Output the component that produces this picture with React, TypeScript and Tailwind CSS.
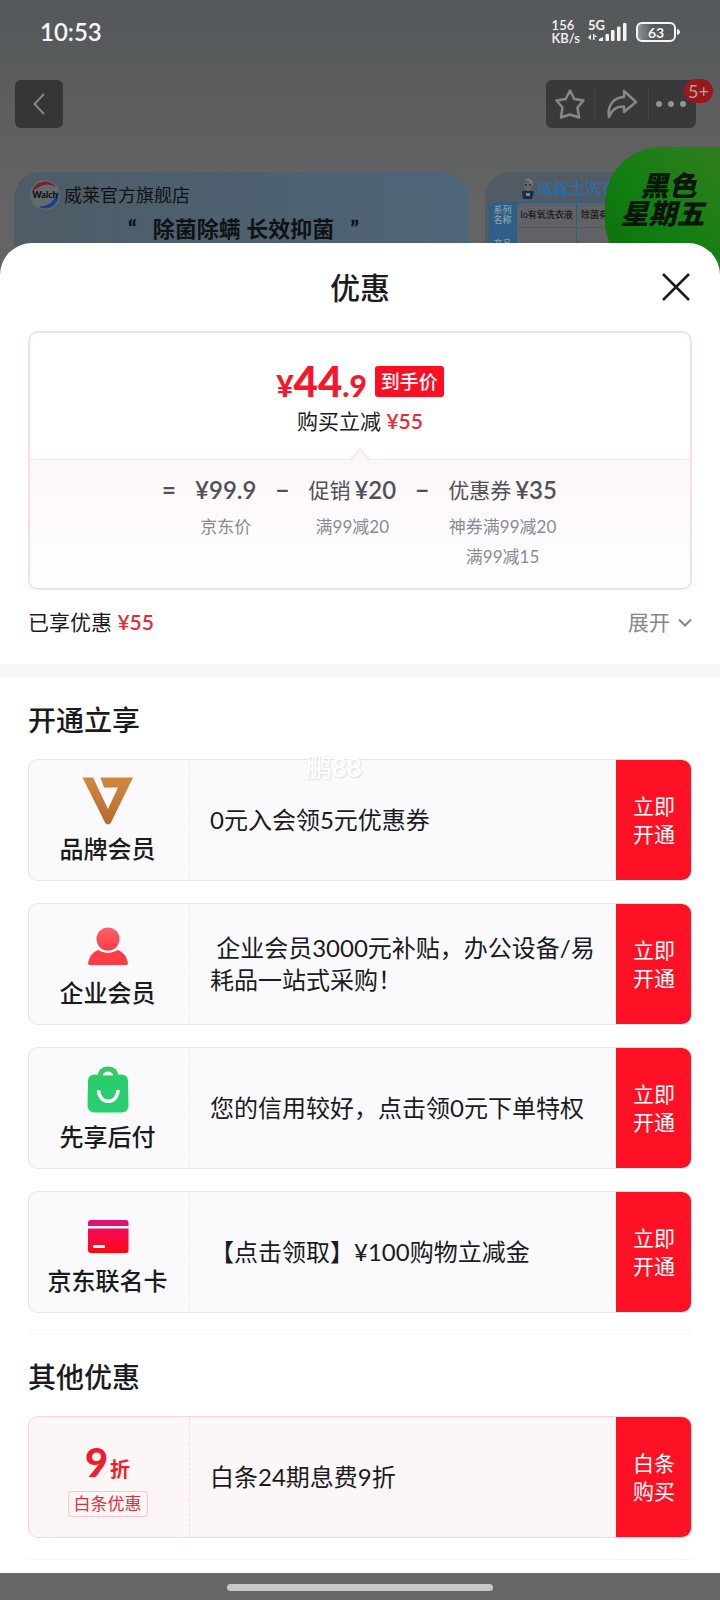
import type { ReactNode } from 'react'

interface Offer {
  id:     string
  lead:   ReactNode
  text:   string
  action: [string, string]
  tone:   'plain' | 'pink'
}

function BrandIcon() {
  return (
    <svg width="52" height="48" viewBox="0 0 52 48" aria-hidden="true">
      <defs>
        <linearGradient id="brand" x1="0" y1="0" x2="0" y2="1">
          <stop offset="0" stopColor="#d3873f" />
          <stop offset="1" stopColor="#b56a2c" />
        </linearGradient>
      </defs>
      <path
        fill="url(#brand)"
        d="M0.5 0.5H11L26 32L36 10.500H22L18.500 0.500H51L29 45.500Q26 49.500 23 45.500Z"
      />
    </svg>
  )
}

function PersonIcon() {
  return (
    <svg width="42" height="48" viewBox="0 0 42 48" aria-hidden="true">
      <defs>
        <linearGradient id="person" x1="0" y1="0" x2="0" y2="1">
          <stop offset="0" stopColor="#fb636c" />
          <stop offset="1" stopColor="#fd3c45" />
        </linearGradient>
      </defs>
      <circle cx="21" cy="18" r="11.500" fill="url(#person)" />
      <path fill="#fd3e46" d="M11 29Q21 35 31 29Q39 32 41 42Q41 44 39 44H3Q1 44 1 42Q3 32 11 29Z" />
    </svg>
  )
}

function BagIcon() {
  return (
    <svg width="42" height="48" viewBox="0 0 42 48" aria-hidden="true">
      <defs>
        <linearGradient id="bag" x1="0" y1="0" x2="0" y2="1">
          <stop offset="0" stopColor="#2bcb68" />
          <stop offset="1" stopColor="#27d072" />
        </linearGradient>
      </defs>
      <path fill="none" stroke="#36c96c" strokeWidth="5" d="M12.500 14C13 6 17 4 21 4S29 6 29.500 14" />
      <path
        fill="url(#bag)"
        d="M8 9.500Q21 11.500 34 9.500Q41 9.500 41 16L41.500 40Q41.500 47.500 34 47.500H8Q0.500 47.500 0.500 40L1 16Q1 9.500 8 9.500Z"
      />
      <path fill="#fff" d="M15.500 9.500Q21 4 26.500 9.500Z" />
      <path fill="none" stroke="#fff" strokeWidth="3.500" d="M11.500 25C12 40 30.500 40 31 25" />
    </svg>
  )
}

function CardIcon() {
  return (
    <svg width="42" height="48" viewBox="0 0 42 48" aria-hidden="true">
      <defs>
        <linearGradient id="card" x1="0" y1="0" x2="0" y2="1">
          <stop offset="0" stopColor="#f00a5c" />
          <stop offset="1" stopColor="#fd0a12" />
        </linearGradient>
      </defs>
      <path fill="#e01270" d="M1 17V14Q1 11 4 11H39Q41.500 11 41.500 14V17Z" />
      <path fill="url(#card)" d="M1 19.500H41.500V41Q41.500 44 39 44H4Q1 44 1 41Z" />
      <rect x="6" y="36" width="12" height="3" rx="1" fill="#fff" />
    </svg>
  )
}

function Lead({ icon, label }: { icon: ReactNode; label: string }) {
  return (
    <>
      {icon}
      <h3 className="mt-2 text-[24px] leading-8 font-medium">{label}</h3>
    </>
  )
}

const MEMBER_OFFERS: Offer[] = [
  { id: 'brand',   lead: <Lead icon={<BrandIcon />} label="品牌会员" />,   text: '0元入会领5元优惠券',                         action: ['立即', '开通'], tone: 'plain' },
  { id: 'company', lead: <Lead icon={<PersonIcon />} label="企业会员" />,  text: '\u00a0企业会员3000元补贴，办公设备/易耗品一站式采购！', action: ['立即', '开通'], tone: 'plain' },
  { id: 'later',   lead: <Lead icon={<BagIcon />} label="先享后付" />,     text: '您的信用较好，点击领0元下单特权',             action: ['立即', '开通'], tone: 'plain' },
  { id: 'joint',   lead: <Lead icon={<CardIcon />} label="京东联名卡" />,  text: '【点击领取】¥100购物立减金',                  action: ['立即', '开通'], tone: 'plain' },
]

const OTHER_OFFERS: Offer[] = [
  {
    id: 'baitiao',
    lead: (
      <>
        <p className="mt-2 flex h-10 items-baseline gap-[2px] leading-10 text-[#f21c2c]">
          <span className="text-[40px] font-black">9</span>
          <span className="text-[20px] font-bold">折</span>
        </p>
        <p className="mt-[9px] rounded-[3px] border border-[#f6c9d0] px-[5px] text-[17px] leading-6 text-[#e0303c]">白条优惠</p>
      </>
    ),
    text: '白条24期息费9折',
    action: ['白条', '购买'],
    tone: 'pink',
  },
]

const TONES = {
  plain: { card: 'border-[#e6e6ea] bg-[#fafafc]', rule: 'border-[#e9e9ee]' },
  pink:  { card: 'border-[#f8d3da] bg-[#fdf6f6]', rule: 'border-[#f5d9dd]' },
}

function OfferCard({ offer }: { offer: Offer }) {
  const tone = TONES[offer.tone]
  return (
    <li className={`flex min-h-[122px] overflow-hidden rounded-[10px] border ${tone.card}`}>
      <div className={`flex w-[161px] shrink-0 flex-col items-center border-r border-dashed pt-[17px] pr-[3px] ${tone.rule}`}>
        {offer.lead}
      </div>
      <p className="flex min-w-0 flex-1 items-center pl-5 pr-2 text-[24px] leading-8">{offer.text}</p>
      <button type="button" className="-my-px -mr-px w-[76px] shrink-0 bg-[#fe1124] text-[21px] leading-7 text-white">
        {offer.action[0]}<br />{offer.action[1]}
      </button>
    </li>
  )
}

function StatusBar() {
  return (
    <div className="flex h-16 items-center justify-between pl-10 pr-10 text-[#f4f4f4]">
      <time className="text-[24px] font-semibold">10:53</time>
      <div className="flex items-center gap-2">
        <p className="text-[13px] leading-[13px] font-semibold">156<br />KB/s</p>
        <div className="relative">
          <span className="absolute left-0 -top-[3px] text-[13px] leading-3 font-bold">5G</span>
          <svg width="40" height="20" viewBox="0 0 40 20" fill="#f4f4f4" aria-hidden="true">
            <path d="M3 12V18L0 15.500ZM5 18V12H6.500V18ZM7 13L9.500 15H7Z" />
            <path d="M11 19V17L15 15V19Z" />
            <rect x="17.500" y="12" width="3.500" height="7" rx="1" />
            <rect x="23" y="8" width="3.500" height="11" rx="1" />
            <rect x="29" y="4.500" width="3.500" height="14.500" rx="1" />
            <rect x="35" y="1" width="3.500" height="18" rx="1" />
          </svg>
        </div>
        <div className="flex items-center">
          <span className="flex h-5 w-10 items-center justify-center rounded-md border-2 border-[#f4f4f4] bg-linear-to-r from-[#8e9292] to-transparent to-40% text-[14px] font-bold">63</span>
          <span className="h-[6px] w-1 rounded-r-sm border-l border-transparent bg-[#f4f4f4] bg-clip-padding" />
        </div>
      </div>
    </div>
  )
}

function NavBar() {
  return (
    <nav className="flex justify-between pl-[15px] pr-6 pt-4 text-[#868788]">
      <button type="button" aria-label="返回" className="flex size-12 items-center justify-center rounded-md bg-[#343637]">
        <svg width="14" height="24" viewBox="0 0 14 24" fill="none" stroke="currentColor" strokeWidth="2" aria-hidden="true">
          <path d="M12 2L2.500 12L12 22" />
        </svg>
      </button>
      <div className="relative flex h-12 w-[150px] items-center rounded-md bg-[#37393a]">
        <button type="button" aria-label="收藏" className="flex h-8 w-[49px] items-center justify-center border-r border-[#434546]">
          <svg width="30" height="30" viewBox="0 0 30 30" fill="none" stroke="currentColor" strokeWidth="2.500" strokeLinejoin="round" aria-hidden="true">
            <path d="M15 1.500L19.300 10L28.500 11.500L22.500 18.500L24 28.500L15 25.500L6 28.500L7.500 18.500L1.500 11.500L10.700 10Z" />
          </svg>
        </button>
        <button type="button" aria-label="分享" className="flex h-8 w-[54px] items-center justify-center border-r border-[#434546]">
          <svg width="30" height="30" viewBox="0 0 30 30" fill="none" stroke="currentColor" strokeWidth="2.500" strokeLinejoin="round" aria-hidden="true">
            <path d="M17 2L29 13L17 23V17.500C10 17 5 20 2 28C0 16 7 8.500 17 8Z" />
          </svg>
        </button>
        <button type="button" aria-label="更多" className="flex h-8 flex-1 items-center justify-center gap-[6px] pr-1">
          <span className="size-[6px] rounded-full bg-[#939494]" />
          <span className="size-[6px] rounded-full bg-[#939494]" />
          <span className="size-[6px] rounded-full bg-[#939494]" />
        </button>
        <span className="absolute -right-[17px] -top-px flex h-6 items-center rounded-full bg-[#98181b] px-1 text-[18px] text-[#bd9c9c]">5+</span>
      </div>
    </nav>
  )
}

function WalchLogo() {
  return (
    <svg width="30" height="30" viewBox="0 0 30 30" aria-hidden="true">
      <circle cx="15" cy="15" r="15" fill="#656a6f" />
      <path d="M2 12A13.500 13.500 0 0 1 26 7Q15 0 2 12Z" fill="#7e1f27" />
      <path d="M28 11A13.500 13.500 0 0 1 8 26.500Q23 27 28 11Z" fill="#1b3f8c" />
      <text x="15" y="18" textAnchor="middle" fontSize="9" fontWeight="900" fill="#0c0c0e">Walch</text>
    </svg>
  )
}

// Product gallery that shows above the sheet, already dimmed
function Gallery() {
  return (
    <div className="relative mt-[44px] flex h-[103px] gap-4 overflow-hidden pl-[14px]">
      <section className="w-[455px] shrink-0 rounded-t-[26px] bg-linear-to-r from-[#4d5c66] to-[#4f6579] pt-2 text-[#101214]">
        <div className="flex items-center gap-1 pl-4">
          <WalchLogo />
          <span className="text-[18px] leading-7">威莱官方旗舰店</span>
        </div>
        <div className="flex justify-center gap-4 pt-[3px] pl-1 text-[22px] leading-8 font-bold">
          <span className="font-black">“</span>
          <span>除菌除螨 长效抑菌</span>
          <span className="font-black">”</span>
        </div>
      </section>
      <section className="min-w-0 flex-1 rounded-tl-[26px] bg-[#525a63] pl-1 pt-1">
        <div className="flex items-center gap-[2px] pb-[2px] pl-8">
          <svg width="14" height="22" viewBox="0 0 14 22" aria-hidden="true">
            <path d="M3 3Q9 -1 12 5V9Q8 3 3 3Z" fill="#77797b" />
            <circle cx="7" cy="9" r="4" fill="#6d6865" />
            <path d="M4 8H6M8 8H10" stroke="#202225" strokeWidth="1.500" />
            <path d="M1 14H13L11 22H2Z" fill="#1a2c49" />
            <path d="M5 16H9V19H5Z" fill="#7f858b" />
          </svg>
          <span className="text-[16px] leading-6 font-medium whitespace-nowrap text-[#2b6da6]">威露士洗衣</span>
        </div>
        <table className="w-[240px] table-fixed border-separate border-spacing-0 overflow-hidden rounded-tl-lg bg-[#2d5f88] text-[9px] leading-[10px] text-[#17191b]">
          <tbody>
            <tr className="h-[25px]">
              <th scope="row" className="w-[27px] font-medium text-[#8ea0b0]">系列<br />名称</th>
              <td className="w-[61px] rounded-tl-md border-l border-t border-r border-[#2d5f88] bg-[#606265] text-center font-medium whitespace-nowrap">Io有氧洗衣液</td>
              <td className="border-t border-[#2d5f88] bg-[#606265] pl-1 font-medium whitespace-nowrap">除菌有</td>
            </tr>
            <tr className="h-[50px] align-top">
              <th scope="row" className="pt-3 font-medium text-[#8ea0b0]">产品</th>
              <td className="border-x border-t border-x-[#2d5f88] border-t-[#55585b] bg-[#606265]" />
              <td className="border-t border-[#55585b] bg-[#606265]" />
            </tr>
          </tbody>
        </table>
      </section>
    </div>
  )
}

function PriceColumn({ label, price, notes }: { label?: string; price: string; notes: string[] }) {
  return (
    <div className="flex flex-col items-center">
      <p className="flex items-center gap-1 leading-7 text-[#505259]">
        {label && <span className="text-[21px]">{label}</span>}
        <span className="text-[24px] font-semibold">{price}</span>
      </p>
      <div className="mt-2 text-center text-[17px] leading-[30px] text-[#888b94]">
        {notes.map(note => <p key={note}>{note}</p>)}
      </div>
    </div>
  )
}

function Operator({ sign }: { sign: string }) {
  return <span className="flex w-3 justify-center text-[24px] leading-7 font-bold text-[#505259]">{sign}</span>
}

function PriceCard() {
  return (
    <section className="overflow-hidden rounded-[10px] border-2 border-[#f5dfe4]">
      <div className="flex flex-col items-center pb-6 pt-7">
        <div className="flex h-10 items-center gap-2">
          <p className="flex h-10 items-baseline leading-10 font-black text-[#f9152a]">
            <span className="text-[30px]">¥</span>
            <span className="text-[42px]">44</span>
            <span className="text-[30px]">.9</span>
          </p>
          <span className="rounded-[3px] bg-[#fb0f24] px-[6px] text-[19px] leading-[31px] font-medium text-white">到手价</span>
        </div>
        <p className="mt-[6px] text-[21px] leading-7">
          购买立减 <span className="font-semibold text-[#ee2837]">¥55</span>
        </p>
      </div>
      <div className="relative flex justify-center gap-5 border-t border-[#f8e6ea] bg-linear-to-b from-[#fdf6f9] to-white pb-4 pt-4">
        <svg className="absolute -top-3 left-1/2 -translate-x-1/2" width="20" height="13" viewBox="0 0 20 13" aria-hidden="true">
          <path d="M0 12L10 1L20 12" fill="#fdf6f9" stroke="#f8e6ea" strokeWidth="1.500" />
        </svg>
        <Operator sign="=" />
        <PriceColumn price="¥99.9" notes={['京东价']} />
        <Operator sign="−" />
        <PriceColumn label="促销" price="¥20" notes={['满99减20']} />
        <Operator sign="−" />
        <PriceColumn label="优惠券" price="¥35" notes={['神券满99减20', '满99减15']} />
      </div>
    </section>
  )
}

export default function App() {
  return (
    <div className="flex min-h-screen flex-col bg-[#676767] font-['Lato','Noto_Sans_CJK_SC',sans-serif] text-[#1a1b1f]">
      <header className="relative overflow-hidden bg-linear-to-b from-[#54585a] to-[#646464] to-75%">
        <StatusBar />
        <NavBar />
        <Gallery />
        <p className="absolute right-0 top-[147px] flex h-[130px] w-[115px] flex-col items-center rounded-l-[56px] bg-linear-to-tr from-[#0b6f0c] via-[#127f13] to-[#2f7d1c] pt-6 text-[28px] leading-7 font-black text-[#0a160a] italic">
          <span className="pl-3">黑色</span>
          <span>星期五</span>
        </p>
      </header>

      <main className="relative -mt-8 flex-1 rounded-t-[32px] bg-white px-7">
        <div className="relative flex h-[88px] items-center justify-center">
          <h1 className="text-[30px] font-medium">优惠</h1>
          <button type="button" aria-label="关闭" className="absolute right-0 flex size-8 items-center justify-center">
            <svg width="28" height="28" viewBox="0 0 28 28" fill="none" stroke="#1a1b1f" strokeWidth="2.500" aria-hidden="true">
              <path d="M1 1L27 27M27 1L1 27" />
            </svg>
          </button>
        </div>

        <PriceCard />

        <div className="flex justify-between pb-7 pt-[18px] text-[21px] leading-7">
          <p>已享优惠 <span className="font-semibold text-[#ee2837]">¥55</span></p>
          <button type="button" className="flex items-center gap-2 text-[#85878d]">
            展开
            <svg width="14" height="9" viewBox="0 0 14 9" fill="none" stroke="currentColor" strokeWidth="2" aria-hidden="true">
              <path d="M1 1.500L7 7.500L13 1.500" />
            </svg>
          </button>
        </div>

        <div className="-mx-7 h-[13px] bg-[#f6f7fb]" />

        <section className="relative border-b border-[#f6f6f8] pb-5">
          <h2 className="pb-[21px] pt-[25px] text-[28px] leading-9 font-medium">开通立享</h2>
          <ul className="flex flex-col gap-[22px]">
            {MEMBER_OFFERS.map(offer => <OfferCard key={offer.id} offer={offer} />)}
          </ul>
          <span className="absolute left-[278px] top-[72px] text-[26px] leading-9 font-medium text-white [text-shadow:1px_1px_2px_#dcdce0]">鹏88</span>
        </section>

        <section className="mb-[13px] border-b border-[#f6f6f8] pb-[21px]">
          <h2 className="pb-[21px] pt-[25px] text-[28px] leading-9 font-medium">其他优惠</h2>
          <ul className="flex flex-col gap-[22px]">
            {OTHER_OFFERS.map(offer => <OfferCard key={offer.id} offer={offer} />)}
          </ul>
        </section>
      </main>

      <footer className="relative flex h-7 items-center justify-center bg-[#676767]">
        <span className="h-[7px] w-[266px] rounded-full bg-[#c9c9c9]" />
      </footer>
    </div>
  )
}
